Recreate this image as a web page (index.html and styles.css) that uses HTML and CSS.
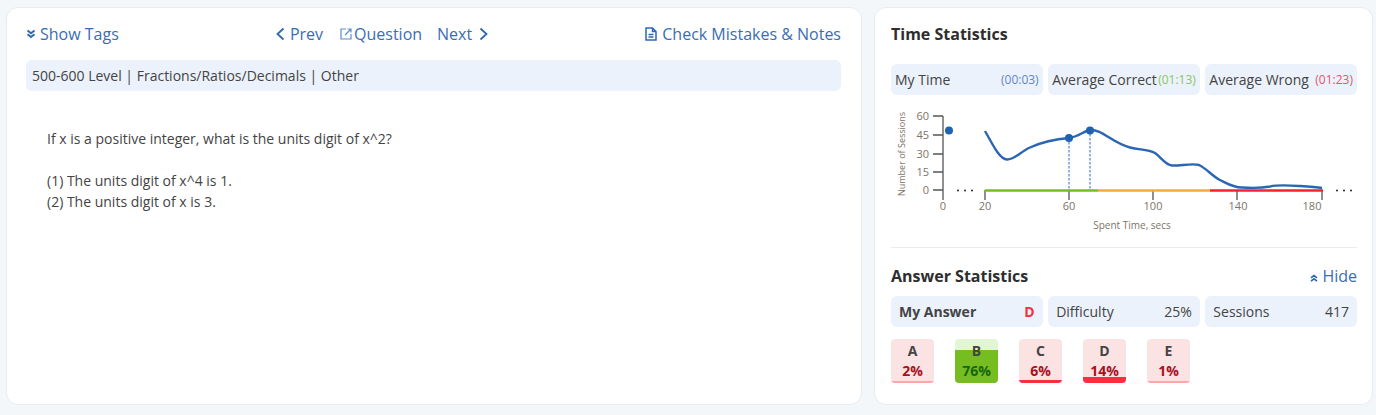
FILE: index.html
```html
<!DOCTYPE html>
<html lang="en">

<head>
    <meta charset="UTF-8">
    <title>Question Review</title>
    <link rel="stylesheet" href="styles.css">
</head>

<body>
    <div class="page">
        <section class="panel question-panel">
            <nav class="nav-row">
                <a class="nav-link tags-link">
                    <svg class="icon-dbl" viewBox="0 0 10 10"><path d="M1.500 1.500 5 4.200 8.500 1.500M1.500 5.300 5 8 8.500 5.300"/></svg>
                    Show Tags
                </a>
                <div class="nav-middle">
                    <a class="nav-link prev-link">
                        <svg class="icon-chev" viewBox="0 0 10 14"><path d="M7.500 1.500 1.500 7l6 5.500"/></svg>
                        Prev
                    </a>
                    <a class="nav-link question-link">
                        <svg class="icon-ext" viewBox="0 0 12 12"><path d="M6 1H1v10h10V6M5 7l6-6M7.500 1H11v3.500"/></svg>
                        Question
                    </a>
                    <a class="nav-link next-link">
                        Next
                        <svg class="icon-chev" viewBox="0 0 10 14"><path d="M2.500 1.500 8.500 7l-6 5.500"/></svg>
                    </a>
                </div>
                <a class="nav-link notes-link">
                    <svg class="icon-doc" viewBox="0 0 12 14"><path d="M1 1h6.500L11 4.500V13H1zM7.500 1v3.500H11M3.500 7.500h5M3.500 10h5"/></svg>
                    Check Mistakes &amp; Notes
                </a>
            </nav>
            <div class="tags-bar">500-600 Level | Fractions/Ratios/Decimals | Other</div>
            <div class="question-text">
                <p>If x is a positive integer, what is the units digit of x^2?</p>
                <p>(1) The units digit of x^4 is 1.<br>(2) The units digit of x is 3.</p>
            </div>
        </section>

        <aside class="panel stats-panel">
            <h2 class="stats-title">Time Statistics</h2>
            <div class="stat-row">
                <div class="stat-box"><span>My Time</span><span class="time time-mine">(00:03)</span></div>
                <div class="stat-box"><span>Average Correct</span><span class="time time-correct">(01:13)</span></div>
                <div class="stat-box"><span>Average Wrong</span><span class="time time-wrong">(01:23)</span></div>
            </div>

            <svg class="chart" viewBox="891 100 466 140" width="466" height="140">
                <g class="axis">
                    <path d="M943 116V200M933 116h10M933 135h10M933 154h10M933 172h10M933 190h10"/>
                    <path d="M985 190v10M1069 190v10M1153 190v10M1237 190v10M1322 190v10"/>
                </g>
                <path class="seg seg-green" d="M985 190.500H1098"/>
                <path class="seg seg-orange" d="M1098 190.500H1210"/>
                <path class="seg seg-red" d="M1210 190.500H1323"/>
                <path class="guide" d="M1069 138V190M1090 130V190"/>
                <path class="curve" d="M985 131C992 143 999 159 1007 159.500C1014 160 1020 152 1030 147.500C1040 143 1056 139 1069 138C1078 137 1084 131 1090 130C1102 129 1112 143 1130 147.500C1140 150 1148 149 1155 153C1161 157 1165 165 1172 165.500C1180 166 1192 163 1199 165C1206 168 1212 176 1220 180C1228 184 1233 187.500 1242 187.500C1250 188 1262 188 1270 186.500C1278 184.500 1292 185.500 1300 186C1308 186.500 1316 187 1322 188"/>
                <circle class="dot" cx="949" cy="130.500" r="4"/>
                <circle class="dot" cx="1069" cy="138" r="4"/>
                <circle class="dot" cx="1090" cy="130.500" r="4"/>
                <g class="dots-more">
                    <circle cx="958" cy="190.500" r="1"/><circle cx="965" cy="190.500" r="1"/><circle cx="972" cy="190.500" r="1"/>
                    <circle cx="1337" cy="190.500" r="1"/><circle cx="1344" cy="190.500" r="1"/><circle cx="1351" cy="190.500" r="1"/>
                </g>
                <g class="tick-y">
                    <text x="929" y="120">60</text>
                    <text x="929" y="139">45</text>
                    <text x="929" y="158">30</text>
                    <text x="929" y="176">15</text>
                    <text x="929" y="194">0</text>
                </g>
                <g class="tick-x">
                    <text x="943" y="210">0</text>
                    <text x="985" y="210">20</text>
                    <text x="1069" y="210">60</text>
                    <text x="1153" y="210">100</text>
                    <text x="1238" y="210">140</text>
                    <text x="1312" y="210">180</text>
                </g>
                <text class="axis-name" x="1132" y="229">Spent Time, secs</text>
                <text class="axis-name axis-name-y" transform="translate(905 154) rotate(-90)">Number of Sessions</text>
            </svg>

            <hr class="divider">

            <div class="answer-head">
                <h2 class="stats-title">Answer Statistics</h2>
                <a class="hide-link">
                    <svg class="icon-hide" viewBox="0 0 8 8"><path d="M1 3.800 4 1.500 7 3.800M1 7.200 4 4.900 7 7.200"/></svg>
                    Hide
                </a>
            </div>
            <div class="stat-row">
                <div class="stat-box answer-box my-answer"><span>My Answer</span><span class="answer-letter">D</span></div>
                <div class="stat-box answer-box"><span>Difficulty</span><span>25%</span></div>
                <div class="stat-box answer-box"><span>Sessions</span><span>417</span></div>
            </div>
            <div class="tile-row">
                <div class="tile"><div class="tile-fill pale" style="height:2px"></div><b>A</b><b class="pct">2%</b></div>
                <div class="tile correct"><div class="tile-fill" style="height:33px"></div><b>B</b><b class="pct">76%</b></div>
                <div class="tile"><div class="tile-fill" style="height:3px"></div><b>C</b><b class="pct">6%</b></div>
                <div class="tile"><div class="tile-fill" style="height:6px"></div><b>D</b><b class="pct">14%</b></div>
                <div class="tile"><div class="tile-fill pale" style="height:2px"></div><b>E</b><b class="pct">1%</b></div>
            </div>
        </aside>
    </div>
</body>

</html>
```

FILE: styles.css
```css
body {
    margin: 0;
    background: #f4f7f9;
    color: #444;
    font-family: "Open Sans", sans-serif;
    font-size: 14px;
}

.page {
    display: flex;
    gap: 12px;
    padding: 7px 3px 10px 6px;
}

.panel {
    box-sizing: border-box;
    height: 398px;
    background: #fff;
    border: 1px solid #e8ecee;
    border-radius: 12px;
}

.question-panel {
    width: 856px;
    padding: 15px 20px 0 19px;
}

.stats-panel {
    width: 499px;
    padding: 15px 15px 0 16px;
}

/* top links */
.nav-row {
    display: flex;
    justify-content: space-between;
    align-items: center;
    height: 22px;
}

.nav-middle {
    display: flex;
    align-items: center;
}

.nav-link,
.hide-link {
    display: flex;
    align-items: center;
    color: #3a6db3;
    font-size: 16px;
    line-height: 22px;
}

.prev-link svg {
    margin-right: 4px;
}

.question-link {
    margin: 0 15px 0 17px;
}

.question-link svg {
    margin-right: 2px;
}

.next-link svg {
    margin-left: 6px;
}

.tags-link svg {
    margin-right: 4px;
}

.notes-link svg {
    margin-right: 5px;
}

svg path {
    fill: none;
}

.icon-dbl {
    width: 10px;
    height: 10px;
    stroke: #2e68b5;
    stroke-width: 2;
}

.icon-hide {
    width: 8px;
    height: 8px;
    margin-top: 4px;
    stroke: #2e68b5;
    stroke-width: 1.700;
}

.icon-chev {
    width: 10px;
    height: 14px;
    stroke: #2e68b5;
    stroke-width: 1.800;
}

.icon-ext {
    width: 12px;
    height: 12px;
    stroke: #5f8ccb;
    stroke-width: 1.200;
}

.icon-doc {
    width: 12px;
    height: 14px;
    stroke: #2e68b5;
    stroke-width: 1.500;
}

.tags-bar {
    margin-top: 15px;
    height: 31px;
    padding-left: 6px;
    background: #ebf2fb;
    border-radius: 6px;
    line-height: 32px;
}

.question-text {
    margin: 37px 0 0 21px;
    line-height: 21px;
}

.question-text p {
    margin: 0 0 21px 0;
}

/* right side */
.stats-title {
    margin: 0;
    font-size: 16px;
    font-weight: 700;
    line-height: 22px;
    color: #2e2e2e;
}

.stat-row {
    display: flex;
    gap: 5.500px;
    margin-top: 19px;
}

.stat-box {
    display: flex;
    flex: 1;
    justify-content: space-between;
    align-items: center;
    box-sizing: border-box;
    height: 31px;
    padding: 0 4px;
    background: #ebf2fb;
    border-radius: 6px;
    white-space: nowrap;
}

.time {
    font-size: 12px;
}

.time-mine {
    color: #5f86c6;
}

.time-correct {
    color: #8cc565;
}

.time-wrong {
    color: #f0506e;
}

.chart {
    display: block;
    margin-top: 5px;
}

.axis path {
    stroke: #555;
    stroke-width: 1.300;
}

.seg {
    stroke-width: 2.500;
}

.seg-green {
    stroke: #76bd22;
}

.seg-orange {
    stroke: #f0ad3e;
}

.seg-red {
    stroke: #f5222d;
}

.guide {
    stroke: #2e68b5;
    stroke-width: 1;
    stroke-dasharray: 2.500 1.500;
}

.curve {
    stroke: #2a66b3;
    stroke-width: 2.400;
}

.dot {
    fill: #1f62b0;
}

.dots-more {
    fill: #222;
}

.chart text {
    fill: #7d7468;
    font-size: 11px;
}

.tick-y text {
    text-anchor: end;
}

.tick-x text {
    text-anchor: middle;
}

.chart .axis-name {
    font-size: 10px;
    text-anchor: middle;
}

.chart .axis-name-y {
    font-size: 9px;
}

.divider {
    margin: 7px 0 0 0;
    border: 0;
    border-top: 1px solid #e8ecee;
}

.answer-head {
    display: flex;
    justify-content: space-between;
    align-items: center;
    margin-top: 17px;
}

.hide-link svg {
    margin-right: 4px;
}

.answer-head + .stat-row {
    margin-top: 9px;
}

.answer-box {
    padding: 0 8px;
}

.my-answer {
    font-weight: 700;
}

.answer-letter {
    color: #f5303f;
}

.tile-row {
    display: flex;
    gap: 21px;
    margin-top: 12px;
}

.tile {
    position: relative;
    box-sizing: border-box;
    width: 43px;
    height: 44px;
    padding-top: 2px;
    overflow: hidden;
    background: #fbe3e4;
    border-radius: 4px;
    text-align: center;
}

.tile b {
    position: relative;
    display: block;
    line-height: 20px;
}

.tile .pct {
    color: #a8101c;
}

.tile-fill {
    position: absolute;
    left: 0;
    right: 0;
    bottom: 0;
    background: #fb2d3e;
}

.tile-fill.pale {
    background: #ffa6ab;
}

.correct {
    background: #e2f5d5;
}

.correct .tile-fill {
    background: #76bd22;
}

.correct .pct {
    color: #17650f;
}
```
